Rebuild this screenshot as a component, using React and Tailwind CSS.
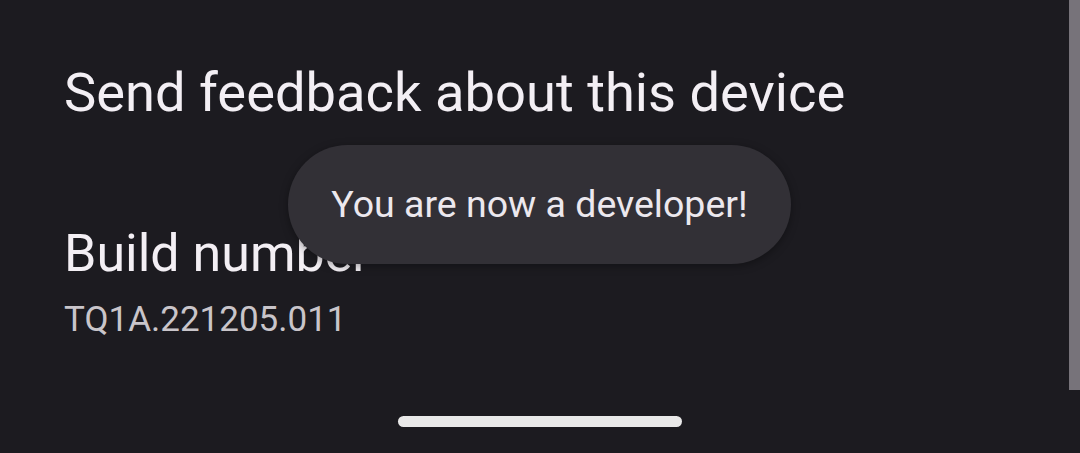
export default function App() {
  return (
    <div
      className="relative w-[1080px] h-[453px] overflow-hidden bg-[#1c1b20]"
      style={{ fontFamily: 'Roboto, "Liberation Sans", sans-serif' }}
    >
      {/* Settings list */}
      <div className="pl-16 pt-[61px] flex flex-col">
        <div className="text-[54.3px] leading-[64px] text-[#f3eff4]">Send feedback about this device</div>
        <div className="mt-[99px] text-[52px] leading-[60px] text-[#f3eff4]">Build number</div>
        <div className="mt-[15px] text-[35px] leading-[42px] text-[#c9c5ca]">TQ1A.221205.011</div>
      </div>

      {/* Toast */}
      <div className="absolute left-[288px] top-[145px] w-[503px] h-[119px] rounded-full bg-[#323036] shadow-[0_2px_8px_rgba(0,0,0,0.35)] flex items-center justify-center">
        <span className="text-[37.5px] text-[#ece8ee]">You are now a developer!</span>
      </div>

      {/* Scrollbar */}
      <div className="absolute right-0 top-0 w-[11px] h-[390px] bg-[#77737a]" />

      {/* Gesture bar */}
      <div className="absolute left-[398px] top-[416px] w-[284px] h-[11px] rounded-full bg-[#e9e9e9]" />
    </div>
  );
}
